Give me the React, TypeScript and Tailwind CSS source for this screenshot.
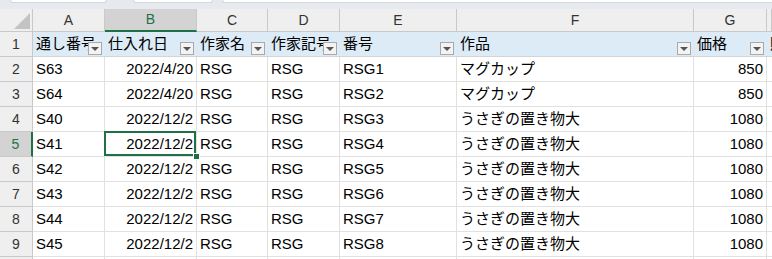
import React from "react";

const rows: string[][] = [
  ["S63", "2022/4/20", "RSG", "RSG", "RSG1", "マグカップ", "850"],
  ["S64", "2022/4/20", "RSG", "RSG", "RSG2", "マグカップ", "850"],
  ["S40", "2022/12/2", "RSG", "RSG", "RSG3", "うさぎの置き物大", "1080"],
  ["S41", "2022/12/2", "RSG", "RSG", "RSG4", "うさぎの置き物大", "1080"],
  ["S42", "2022/12/2", "RSG", "RSG", "RSG5", "うさぎの置き物大", "1080"],
  ["S43", "2022/12/2", "RSG", "RSG", "RSG6", "うさぎの置き物大", "1080"],
  ["S44", "2022/12/2", "RSG", "RSG", "RSG7", "うさぎの置き物大", "1080"],
  ["S45", "2022/12/2", "RSG", "RSG", "RSG8", "うさぎの置き物大", "1080"],
  ["", "", "", "", "", "", ""],
];

const headers = ["通し番号", "仕入れ日", "作家名", "作家記号", "番号", "作品", "価格", "販売価格"];
const letters = ["A", "B", "C", "D", "E", "F", "G", ""];
const rightAligned = [false, true, false, false, false, false, true];

function FilterButton() {
  return (
    <div className="absolute right-[3px] bottom-[1px] w-[14px] h-[13px] border border-[#a9a9a9] bg-[#f3f3f3] flex items-center justify-center">
      <div className="w-0 h-0 border-l-[4px] border-r-[4px] border-t-[4px] border-l-transparent border-r-transparent border-t-[#555555] mt-[1px]" />
    </div>
  );
}

export default function App() {
  const font = { fontFamily: '"Liberation Sans", "Noto Sans CJK JP", sans-serif' };
  return (
    <div className="w-[772px] h-[259px] overflow-hidden bg-white text-black" style={font}>
      {/* top strip */}
      <div className="h-[9px] bg-[#e6e9ee] relative">
        <div className="absolute left-[10px] top-0 w-[97px] h-[3px] bg-white rounded-b-[3px] border-b border-l border-r border-[#d4d7dc]" />
        <div className="absolute left-[133px] top-0 w-[80px] h-[3px] bg-white rounded-b-[3px] border-b border-l border-r border-[#d4d7dc]" />
        <div className="absolute left-[222px] top-0 w-[560px] h-[3px] bg-white rounded-b-[3px] border-b border-l border-[#d4d7dc]" />
      </div>
      <div className="grid grid-cols-[33px_72px_92px_71px_72px_117px_237px_73px_1fr] grid-rows-[23px_25px_25px_25px_25px_25px_25px_25px_25px_25px_25px]">
        {/* corner */}
        <div className="bg-[#efefef] border-r border-b border-[#c9c9c9] relative">
          <svg className="absolute right-[2px] bottom-[2px]" width="16" height="16" viewBox="0 0 16 16">
            <polygon points="16,0 16,16 0,16" fill="#c3c3c3" />
          </svg>
        </div>
        {letters.map((l, i) =>
          i === 1 ? (
            <div
              key={i}
              className="bg-[#d3d3d3] border-r border-[#c9c9c9] border-b-2 border-b-[#1e7145] flex items-center justify-center text-[14px] text-[#1e7145]"
            >
              {l}
            </div>
          ) : (
            <div
              key={i}
              className="bg-[#efefef] border-r border-b border-[#c9c9c9] flex items-center justify-center text-[14px] text-[#333333]"
            >
              {l}
            </div>
          )
        )}

        {/* row 1 headers */}
        <div className="bg-[#efefef] border-r border-b border-[#c9c9c9] flex items-center justify-center text-[14px] text-[#333333]">
          1
        </div>
        {headers.map((h, i) => (
          <div key={i} className="bg-[#ddebf7] border-b border-[#d4d4d4] relative">
            <div className="absolute inset-0 overflow-hidden whitespace-nowrap pl-[3px] flex items-center text-[15px]">
              {h}
            </div>
            {i < 7 && <FilterButton />}
          </div>
        ))}

        {rows.map((r, ri) => {
          const rowNum = ri + 2;
          const sel = rowNum === 5;
          return (
            <React.Fragment key={ri}>
              {sel ? (
                <div className="bg-[#d3d3d3] border-b border-[#c9c9c9] border-r-2 border-r-[#1e7145] flex items-center justify-center text-[14px] text-[#1e7145]">
                  {rowNum}
                </div>
              ) : (
                <div className="bg-[#efefef] border-r border-b border-[#c9c9c9] flex items-center justify-center text-[14px] text-[#333333]">
                  {rowNum <= 9 ? rowNum : ""}
                </div>
              )}
              {r.map((c, ci) => (
                <div key={ci} className="border-r border-b border-[#e1e1e1] relative">
                  <div
                    className={
                      "absolute inset-0 overflow-hidden whitespace-nowrap flex items-center text-[15px] " +
                      (rightAligned[ci] ? "justify-end pr-[3px]" : "pl-[3px]")
                    }
                  >
                    {c}
                  </div>
                  {sel && ci === 1 && (
                    <>
                      <div className="absolute left-[-1px] top-[-1px] right-0 bottom-0 border-2 border-[#1e7145]" />
                      <div className="absolute right-[-4px] bottom-[-4px] w-[7px] h-[7px] bg-[#1e7145] border border-white z-10" />
                    </>
                  )}
                </div>
              ))}
              <div className="border-b border-[#e1e1e1]" />
            </React.Fragment>
          );
        })}
      </div>
    </div>
  );
}
